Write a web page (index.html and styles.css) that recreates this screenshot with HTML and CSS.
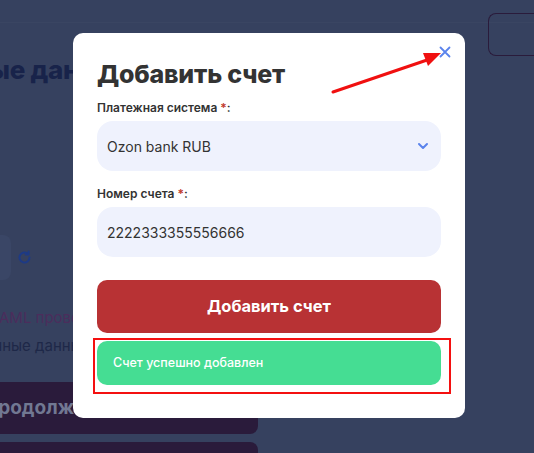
FILE: index.html
```html
<!DOCTYPE html>
<html lang="ru">
<head>
    <meta charset="UTF-8">
    <meta name="viewport" content="width=device-width, initial-scale=1.0">
    <title>Добавить счет</title>
    <link rel="stylesheet" href="styles.css">
</head>
<body>

    <div class="page">
        <div class="page-top"></div>
        <div class="page-body">
            <div class="left-col">
                <h1 class="page-title">Платежные данные</h1>
                <div class="check-row">
                    <div class="check-box"></div>
                    <svg class="refresh" width="15" height="15" viewBox="0 0 24 24" fill="none" stroke="#1d3a86" stroke-width="3.2" stroke-linecap="round">
                        <path d="M20 12a8 8 0 1 1-2.4-5.7"/>
                        <path d="M18.5 2.5v4.6h-4.6" stroke-linejoin="round"/>
                    </svg>
                </div>
                <p class="note note-aml">AML проверку</p>
                <p class="note note-data">личные данные</p>
                <div class="dark-btn">Продолжить</div>
                <div class="dark-btn"></div>
            </div>
            <div class="right-col">
                <div class="outline-box"></div>
            </div>
        </div>
    </div>

    <div class="overlay">
        <div class="modal">
            <button class="close" type="button" aria-label="Закрыть">
                <svg width="12" height="12" viewBox="0 0 12 12" stroke="#5a83ec" stroke-width="1.8" stroke-linecap="round">
                    <path d="M1.5 1.5l9 9M10.5 1.5l-9 9"/>
                </svg>
            </button>

            <!-- annotation arrow pointing at close button -->
            <svg class="arrow" width="120" height="50" viewBox="0 0 120 50">
                <line x1="3" y1="45" x2="100" y2="12" stroke="#f01010" stroke-width="3" stroke-linecap="round"/>
                <polygon points="111,6 93,6 98,19" fill="#f01010"/>
            </svg>

            <h2>Добавить счет</h2>

            <label class="field-label">Платежная система <span class="req">*</span>:</label>
            <div class="field select">
                <span>Ozon bank RUB</span>
                <svg width="12" height="8" viewBox="0 0 12 8" fill="none" stroke="#5a83ec" stroke-width="2" stroke-linecap="round" stroke-linejoin="round">
                    <path d="M2 2l4 4 4-4"/>
                </svg>
            </div>

            <label class="field-label">Номер счета <span class="req">*</span>:</label>
            <div class="field">2222333355556666</div>

            <div class="submit">Добавить счет</div>

            <div class="success">
                Счет успешно добавлен
                <div class="highlight"></div>
            </div>
        </div>
    </div>

</body>
</html>
```

FILE: styles.css
```css
* {
    box-sizing: border-box;
}

body {
    margin: 0;
    font-family: "Inter", "Liberation Sans", sans-serif;
    background-color: #36415f;
    width: 534px;
    height: 453px;
    overflow: hidden;
}

/* page behind the modal (already dimmed) */
.page {
    height: 453px;
    overflow: hidden;
}

.page-top {
    height: 23px;
    border-bottom: 1px solid #3a4562;
}

.page-body {
    display: flex;
}

.left-col {
    width: 258px;
    flex-shrink: 0;
}

.page-title {
    margin: 31px 0 0 -128px;
    font-size: 26px;
    font-weight: 800;
    color: #18234a;
    white-space: nowrap;
    letter-spacing: -0.3px;
}

.check-row {
    display: flex;
    align-items: center;
    margin-top: 150px;
    gap: 6px;
}

.check-box {
    width: 11px;
    height: 45px;
    background-color: #3a4666;
    border-radius: 0 8px 8px 0;
}

.note {
    margin: 0;
    font-size: 15px;
    line-height: 20px;
    color: #1e2848;
    white-space: nowrap;
}

.note-aml {
    margin-top: 28px;
    margin-left: -1px;
    color: #4b2d5c;
}

.note-data {
    margin-top: 8px;
    margin-left: -24px;
}

.dark-btn {
    height: 52px;
    margin-top: 26px;
    margin-left: -16px;
    background-color: #2a1b3b;
    border-radius: 0 8px 8px 0;
    color: #717892;
    font-size: 19px;
    font-weight: 700;
    line-height: 52px;
    white-space: nowrap;
}

.dark-btn + .dark-btn {
    margin-top: 8px;
}

.right-col {
    flex: 1;
    padding: 14px 0 0 230px;
    margin-top: -24px;
}

.outline-box {
    height: 43px;
    border: 1px solid #2a1b3b;
    border-right: none;
    border-radius: 8px 0 0 8px;
}

/* modal */
.overlay {
    position: fixed;
    inset: 0;
    display: flex;
    align-items: flex-start;
    justify-content: center;
    padding: 33px 0 0 4px;
}

.modal {
    position: relative;
    width: 392px;
    height: 385px;
    background-color: white;
    border-radius: 10px;
    padding: 25px 24px 0 24px;
}

.modal h2 {
    margin: 0 0 10px;
    font-size: 25px;
    line-height: 32px;
    font-weight: 800;
    color: #333;
    letter-spacing: -0.2px;
}

.close {
    position: absolute;
    top: 13px;
    right: 14px;
    padding: 0;
    border: none;
    background: none;
    cursor: pointer;
}

.arrow {
    position: absolute;
    left: 257px;
    top: 14px;
}

.field-label {
    display: block;
    font-size: 12px;
    font-weight: 600;
    color: #333;
    line-height: 16px;
}

.req {
    color: #c0392b;
}

.field {
    display: flex;
    align-items: center;
    justify-content: space-between;
    height: 50px;
    margin: 5px 0 15px;
    padding: 0 10px;
    background-color: #eff2fd;
    border-radius: 16px;
    font-size: 14px;
    color: #333;
}

.select svg {
    margin-right: 2px;
}

.submit {
    height: 53px;
    margin-top: 23px;
    background-color: #b83234;
    border-radius: 10px;
    color: white;
    font-size: 16.5px;
    font-weight: 700;
    text-align: center;
    line-height: 53px;
}

.success {
    position: relative;
    height: 44px;
    margin-top: 8px;
    padding-left: 16px;
    background-color: #45dd93;
    border-radius: 10px;
    color: white;
    font-size: 12.5px;
    font-weight: 500;
    line-height: 44px;
}

/* red annotation frame */
.highlight {
    position: absolute;
    top: -3px;
    left: -4px;
    right: -10px;
    bottom: -9px;
    border: 2px solid #f41010;
}
```
